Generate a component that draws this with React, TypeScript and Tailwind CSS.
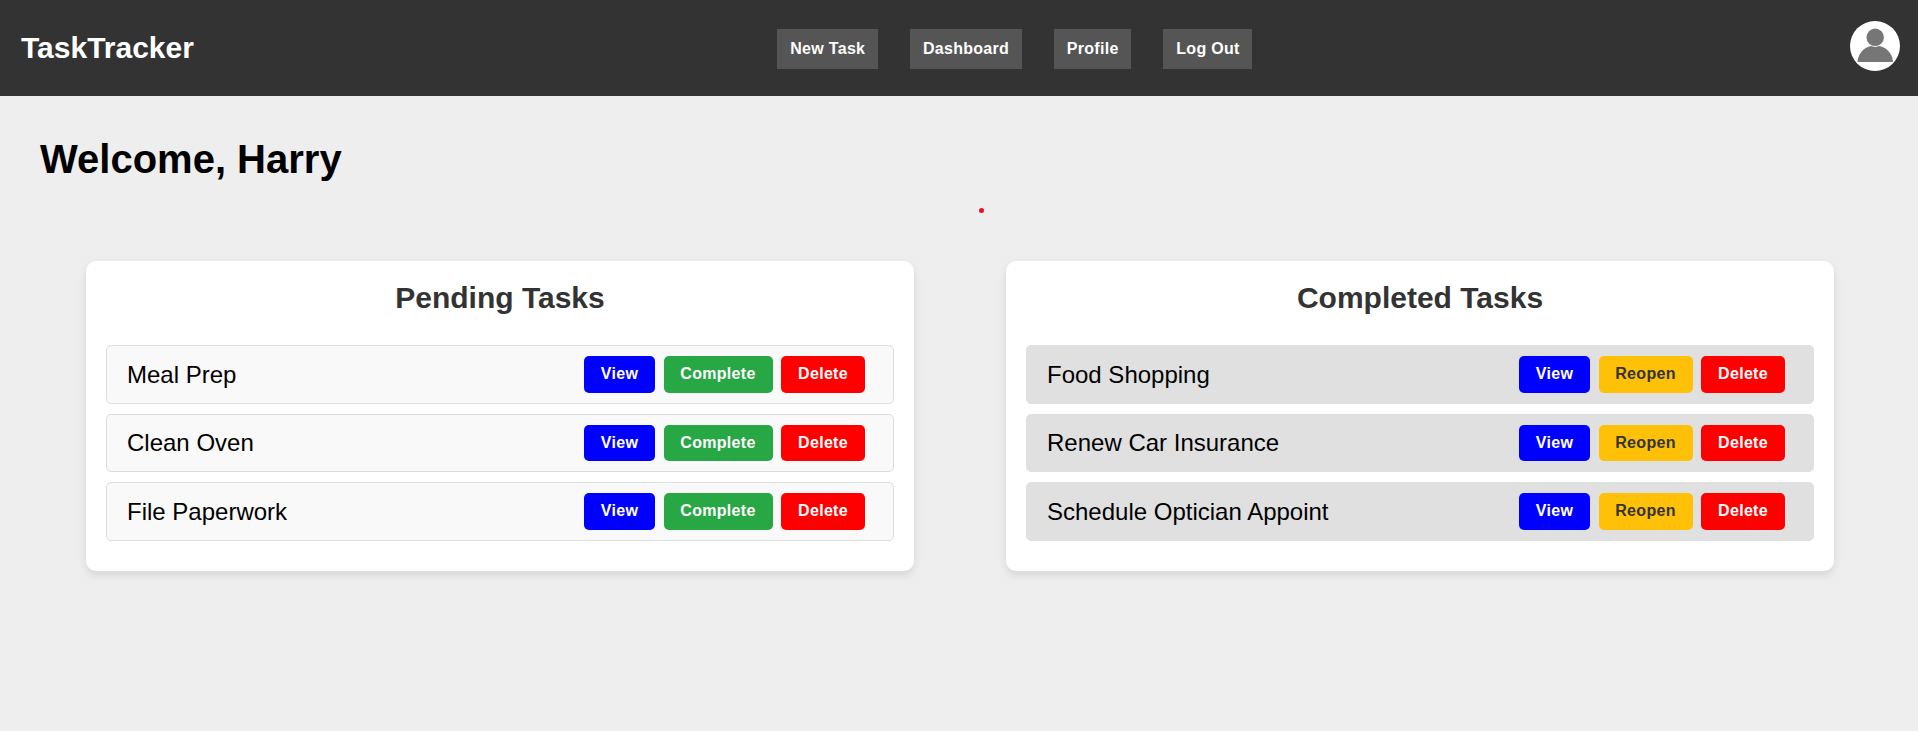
const sans = "font-['Liberation_Sans',Arial,sans-serif]";

function Btn({ label, color }: { label: string; color: string }) {
  return (
    <button className={`rounded-[5px] py-[10px] text-center text-base font-bold leading-[16.5px] tracking-[0.3px] ${color}`}>{label}</button>
  );
}

function Row({ title, done }: { title: string; done: boolean }) {
  return (
    <li className={`flex items-center justify-between rounded-[5px] border py-[10px] pl-5 pr-[28px] text-2xl text-black ${done ? 'border-[#e0e0e0] bg-[#e0e0e0]' : 'border-[#dddddd] bg-[#f9f9f9]'}`}>
      <span className="leading-[27px]">{title}</span>
      <div className="flex gap-[8.5px]">
        <Btn label="View" color="w-[71px] bg-[#0000ff] text-white" />
        {done ? <Btn label="Reopen" color="w-[94px] bg-[#ffc107] text-[#333333]" /> : <Btn label="Complete" color="w-[109px] bg-[#28a745] text-white" />}
        <Btn label="Delete" color="w-[84px] bg-[#ff0000] text-white" />
      </div>
    </li>
  );
}

function Card({ title, items, done }: { title: string; items: string[]; done: boolean }) {
  return (
    <section className="rounded-[10px] bg-white p-5 pb-[30px] shadow-[0_4px_8px_rgba(0,0,0,0.1)]">
      <h2 className="mb-[30px] text-center text-[30px] font-bold leading-[34px] text-[#333333]">{title}</h2>
      <ul className="flex flex-col gap-[10px]">
        {items.map((t) => <Row key={t} title={t} done={done} />)}
      </ul>
    </section>
  );
}

function Avatar() {
  return (
    <svg width="50" height="50" viewBox="0 0 50 50" className="block">
      <circle cx="25" cy="25" r="25" fill="#ffffff" />
      <path d="M7.5 41 C8 31 16 24.5 25.2 24.5 C34.5 24.5 42.5 31 43 41 Z" fill="#767676" />
      <circle cx="25.2" cy="16.3" r="9.8" fill="#ffffff" />
      <circle cx="25.2" cy="16.3" r="8.7" fill="#767676" />
    </svg>
  );
}

export default function App() {
  return (
    <div className={`min-h-[731px] bg-[#eeeeee] ${sans}`}>
      <header className="flex h-24 items-start justify-between bg-[#333333] pl-[21px] pr-[18px]">
        <div className="mt-[31px] text-[30px] font-bold leading-[34px] text-white">TaskTracker</div>
        <nav className="mr-[14px] mt-[29px] flex gap-8">
          {['New Task', 'Dashboard', 'Profile', 'Log Out'].map((n) => (
            <a key={n} className="bg-[#555555] px-[12.8px] pb-[11px] pt-[10px] text-base font-bold leading-[19px] tracking-[0.3px] text-white">{n}</a>
          ))}
        </nav>
        <div className="mt-[21px]"><Avatar /></div>
      </header>
      <main>
        <h1 className="pl-10 pt-10 text-[40px] font-bold leading-[46px] text-black">Welcome, Harry</h1>
        <div className="ml-[979px] mt-[26px] h-[5px] w-[5px] rounded-full bg-[#e81123]" />
        <div className="mt-[48px] grid grid-cols-2 gap-[92px] pl-[86px] pr-[84px]">
          <Card title="Pending Tasks" items={['Meal Prep', 'Clean Oven', 'File Paperwork']} done={false} />
          <Card title="Completed Tasks" items={['Food Shopping', 'Renew Car Insurance', 'Schedule Optician Appoint']} done={true} />
        </div>
      </main>
    </div>
  );
}
